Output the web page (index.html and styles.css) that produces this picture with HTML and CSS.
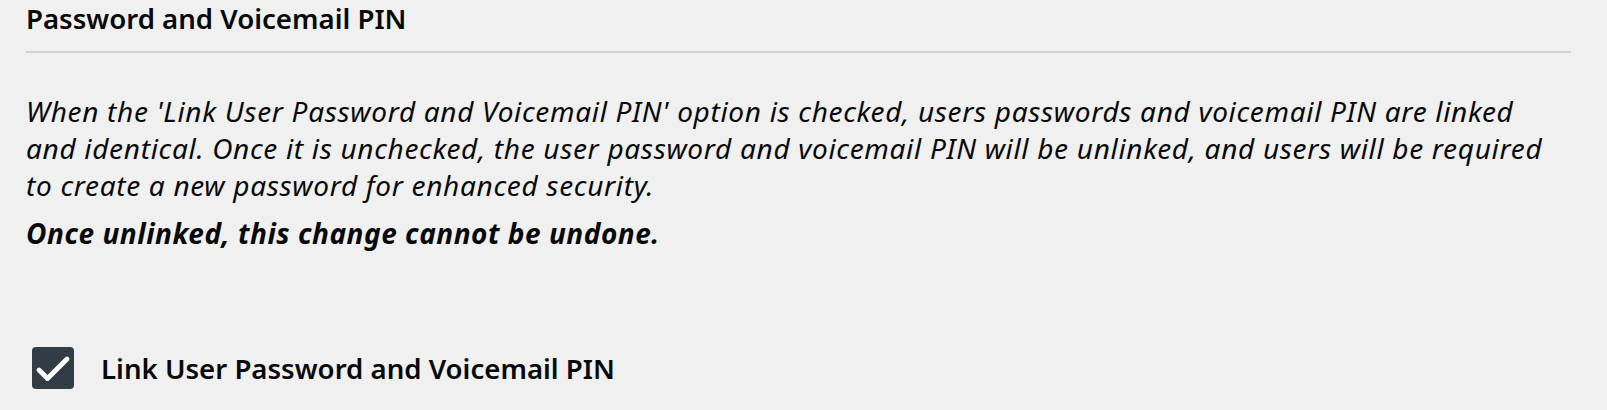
FILE: index.html
```html
<!DOCTYPE html>
<html lang="en">
<head>
<meta charset="utf-8">
<title>Password and Voicemail PIN</title>
<link rel="stylesheet" href="styles.css">
</head>
<body>
<section class="panel">
  <h2 class="panel-title">Password and Voicemail PIN</h2>
  <p class="panel-desc">When the 'Link User Password and Voicemail PIN' option is checked, users passwords and voicemail PIN are linked and identical. Once it is unchecked, the user password and voicemail PIN will be unlinked, and users will be required to create a new password for enhanced security.</p>
  <p class="panel-warning">Once unlinked, this change cannot be undone.</p>
  <label class="check-row">
    <span class="check-box">
      <svg viewBox="0 0 42 42" width="42" height="42" aria-hidden="true">
        <path d="M7 23 L15.5 31.5 L35 12" fill="none" stroke="#ffffff" stroke-width="4.8" stroke-linecap="round" stroke-linejoin="round"/>
      </svg>
    </span>
    <span class="check-label">Link User Password and Voicemail PIN</span>
  </label>
</section>
</body>
</html>
```
FILE: styles.css
```css
html, body {
  margin: 0;
  padding: 0;
  background: #f0f0f0;
}

body {
  font-family: "Noto Sans", "Open Sans", sans-serif;
  color: #080808;
}

.panel {
  padding: 0 36px 0 26px;
  width: 1545px;
}

.panel-title {
  margin: 0;
  font-size: 27.6px;
  font-weight: 600;
  line-height: 36px;
  padding-bottom: 15px;
  border-bottom: 2px solid #d2d2d2;
}

.panel-desc {
  margin: 40px 0 0;
  width: 1530px;
  font-size: 28px;
  font-style: italic;
  font-weight: 400;
  line-height: 37px;
  letter-spacing: 0.68px;
}

.panel-warning {
  margin: 11px 0 0;
  font-size: 28px;
  font-style: italic;
  font-weight: 700;
  line-height: 37px;
  letter-spacing: 0.52px;
}

.check-row {
  display: flex;
  align-items: center;
  gap: 27px;
  margin: 95px 0 0 6px;
}

.check-box {
  display: flex;
  width: 42px;
  height: 42px;
  border-radius: 4px;
  background: #323c46;
  flex: none;
}

.check-label {
  font-size: 27.6px;
  font-weight: 600;
  line-height: 42px;
}
```
